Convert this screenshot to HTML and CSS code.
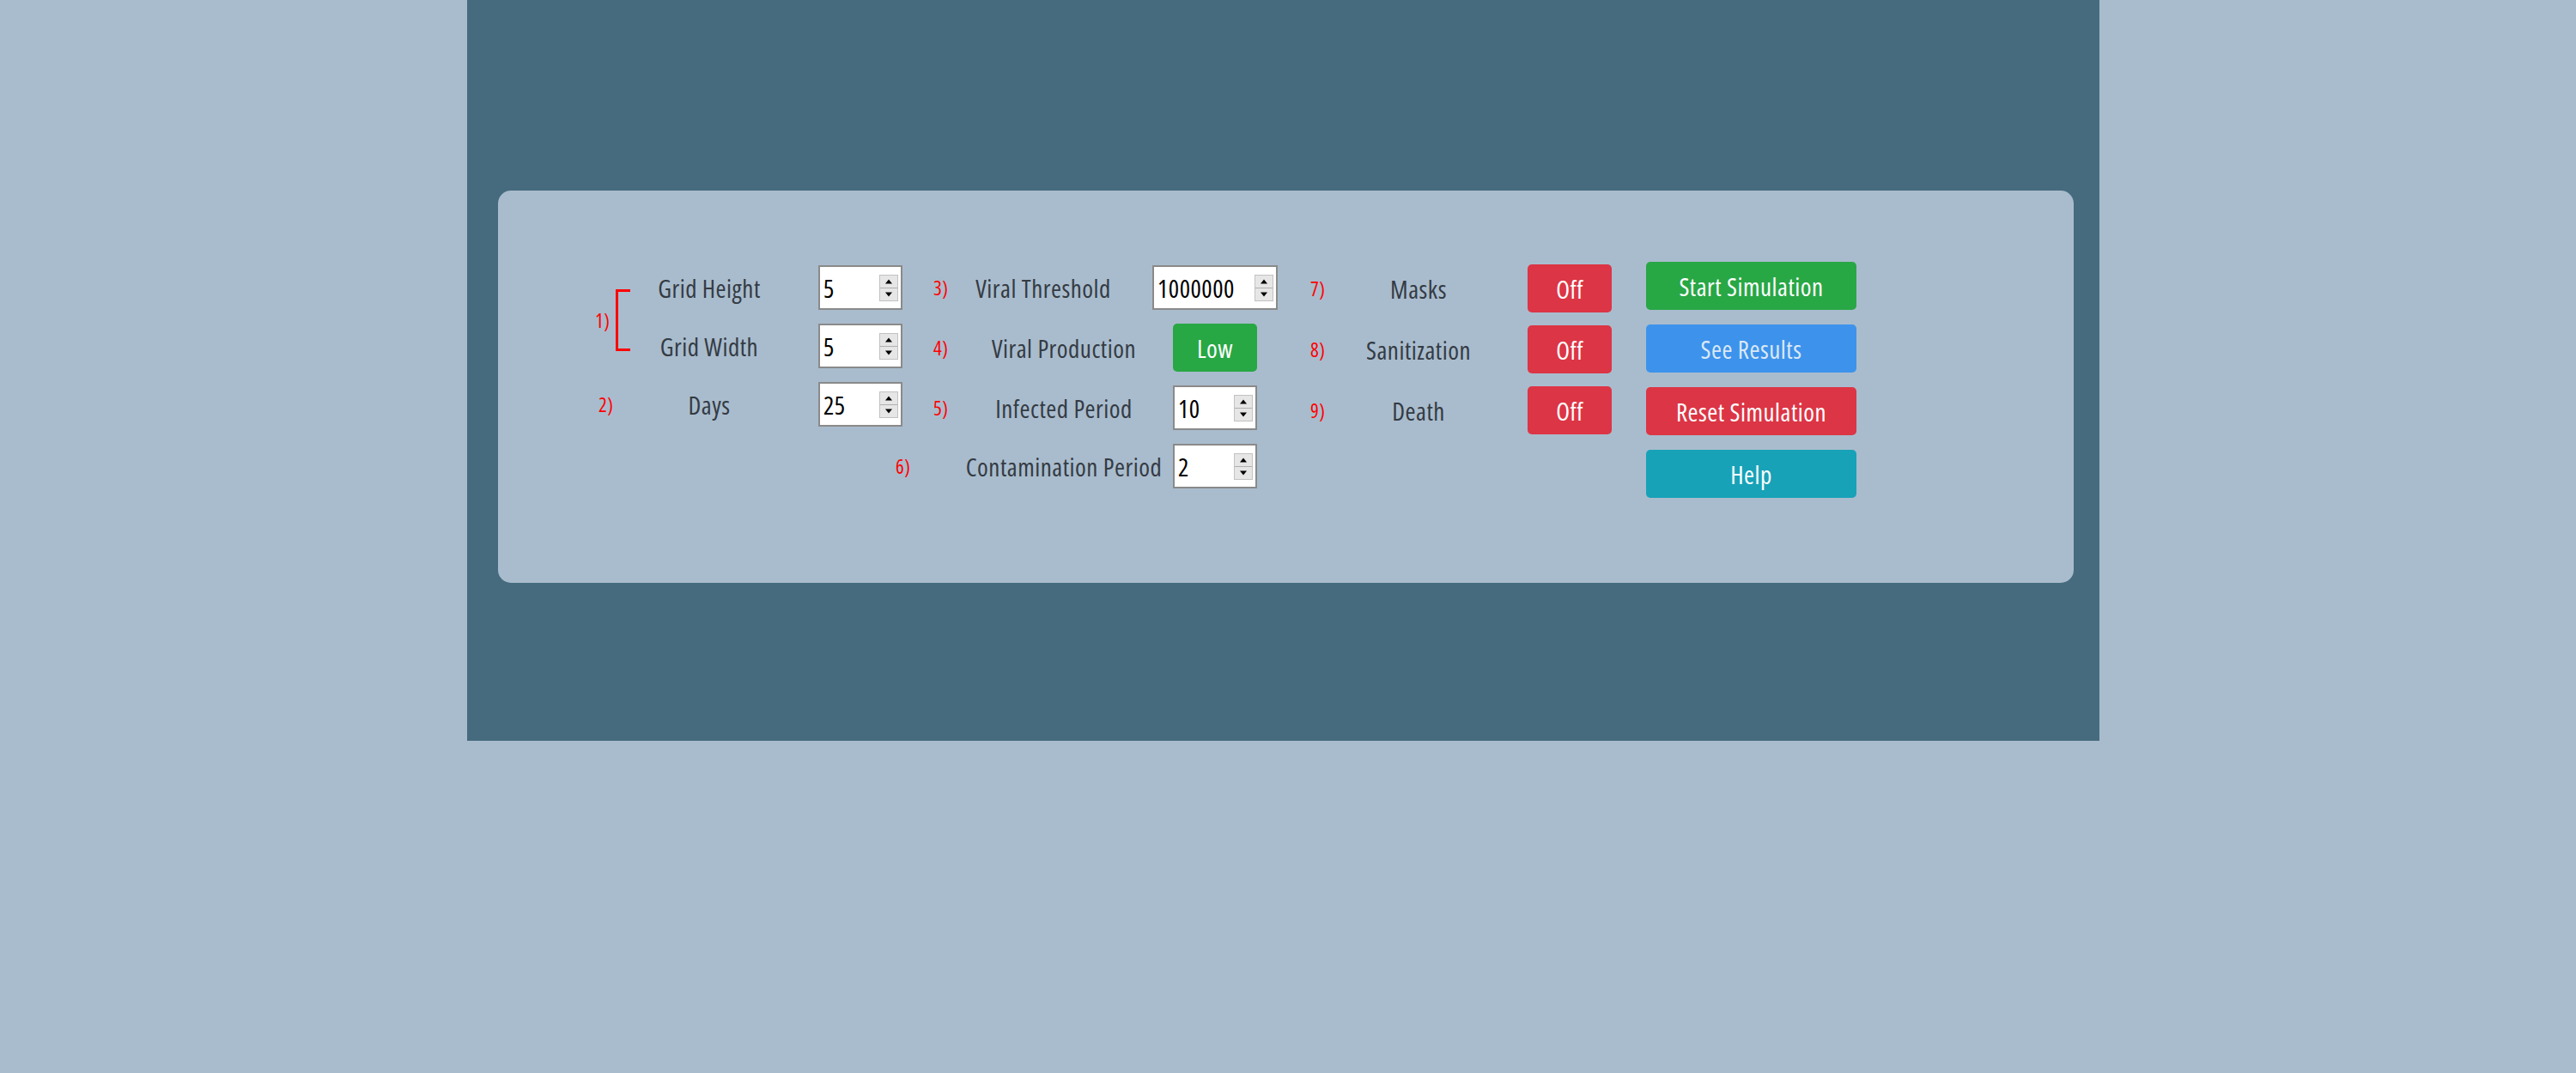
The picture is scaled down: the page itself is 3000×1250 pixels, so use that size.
FILE: index.html
```html
<!DOCTYPE html>
<html lang="en">
<head>
<meta charset="utf-8">
<title>Simulation Settings</title>
<link rel="stylesheet" href="styles.css">
</head>
<body>
<div class="stage">
  <div class="card">

    <div class="sec sec1">
      <div class="idx idx-pair"><span class="red">1)</span><span class="bracket"></span></div>
      <div class="lbl">Grid Height</div>
      <div class="spin w98"><span class="val">5</span><svg class="spinner" viewBox="0 0 22 31" width="22" height="31"><rect x="0.5" y="0.5" width="21" height="30" fill="#e6e6e6" stroke="#c2c2c2"/><line x1="1" y1="15.5" x2="21" y2="15.5" stroke="#b0b0b0"/><path d="M7 10.5 L11 5.5 L15 10.5 Z" fill="#000"/><path d="M7 20.5 L11 25.5 L15 20.5 Z" fill="#000"/></svg></div>
      <div class="lbl">Grid Width</div>
      <div class="spin w98"><span class="val">5</span><svg class="spinner" viewBox="0 0 22 31" width="22" height="31"><rect x="0.5" y="0.5" width="21" height="30" fill="#e6e6e6" stroke="#c2c2c2"/><line x1="1" y1="15.5" x2="21" y2="15.5" stroke="#b0b0b0"/><path d="M7 10.5 L11 5.5 L15 10.5 Z" fill="#000"/><path d="M7 20.5 L11 25.5 L15 20.5 Z" fill="#000"/></svg></div>
      <div class="idx idx-single"><span class="red">2)</span></div>
      <div class="lbl">Days</div>
      <div class="spin w98"><span class="val">25</span><svg class="spinner" viewBox="0 0 22 31" width="22" height="31"><rect x="0.5" y="0.5" width="21" height="30" fill="#e6e6e6" stroke="#c2c2c2"/><line x1="1" y1="15.5" x2="21" y2="15.5" stroke="#b0b0b0"/><path d="M7 10.5 L11 5.5 L15 10.5 Z" fill="#000"/><path d="M7 20.5 L11 25.5 L15 20.5 Z" fill="#000"/></svg></div>
    </div>

    <div class="sec sec2">
      <div class="row2 row2-first">
        <span class="num2 red">3)</span>
        <div class="lbl lbl2 lbl2-first">Viral Threshold</div>
        <div class="spin w146 gap-first"><span class="val">1000000</span><svg class="spinner" viewBox="0 0 22 31" width="22" height="31"><rect x="0.5" y="0.5" width="21" height="30" fill="#e6e6e6" stroke="#c2c2c2"/><line x1="1" y1="15.5" x2="21" y2="15.5" stroke="#b0b0b0"/><path d="M7 10.5 L11 5.5 L15 10.5 Z" fill="#000"/><path d="M7 20.5 L11 25.5 L15 20.5 Z" fill="#000"/></svg></div>
      </div>
      <div class="row2 row2-btn">
        <span class="num2 red">4)</span>
        <div class="lbl lbl2">Viral Production</div>
        <div class="btn btn-green toggle gap-std">Low</div>
      </div>
      <div class="row2">
        <span class="num2 red">5)</span>
        <div class="lbl lbl2">Infected Period</div>
        <div class="spin w98 gap-std"><span class="val">10</span><svg class="spinner" viewBox="0 0 22 31" width="22" height="31"><rect x="0.5" y="0.5" width="21" height="30" fill="#e6e6e6" stroke="#c2c2c2"/><line x1="1" y1="15.5" x2="21" y2="15.5" stroke="#b0b0b0"/><path d="M7 10.5 L11 5.5 L15 10.5 Z" fill="#000"/><path d="M7 20.5 L11 25.5 L15 20.5 Z" fill="#000"/></svg></div>
      </div>
      <div class="row2">
        <span class="num2 num2-out red">6)</span>
        <div class="lbl lbl2">Contamination Period</div>
        <div class="spin w98 gap-std"><span class="val">2</span><svg class="spinner" viewBox="0 0 22 31" width="22" height="31"><rect x="0.5" y="0.5" width="21" height="30" fill="#e6e6e6" stroke="#c2c2c2"/><line x1="1" y1="15.5" x2="21" y2="15.5" stroke="#b0b0b0"/><path d="M7 10.5 L11 5.5 L15 10.5 Z" fill="#000"/><path d="M7 20.5 L11 25.5 L15 20.5 Z" fill="#000"/></svg></div>
      </div>
    </div>

    <div class="sec sec3">
      <div class="row3">
        <span class="num3 red">7)</span>
        <div class="lbl lbl3">Masks</div>
        <div class="btn btn-red toggle">Off</div>
      </div>
      <div class="row3">
        <span class="num3 red">8)</span>
        <div class="lbl lbl3">Sanitization</div>
        <div class="btn btn-red toggle">Off</div>
      </div>
      <div class="row3">
        <span class="num3 red">9)</span>
        <div class="lbl lbl3">Death</div>
        <div class="btn btn-red toggle">Off</div>
      </div>
    </div>

    <div class="sec sec4">
      <div class="btn btn-green action">Start Simulation</div>
      <div class="btn btn-blue action">See Results</div>
      <div class="btn btn-red action">Reset Simulation</div>
      <div class="btn btn-teal action">Help</div>
    </div>

  </div>
</div>
</body>
</html>
```

FILE: styles.css
```css
html, body {
  margin: 0;
  padding: 0;
}

body {
  background: #a9bccd;
  width: 3000px;
  height: 1250px;
  font-family: "Open Sans", "Noto Sans", "Liberation Sans", sans-serif;
  font-stretch: 75%;
  letter-spacing: 0.5px;
}

.stage {
  box-sizing: border-box;
  margin-left: 544px;
  width: 1901px;
  height: 863px;
  background: #466b7e;
  padding-top: 222px;
  padding-left: 36px;
}

.card {
  box-sizing: border-box;
  width: 1835px;
  height: 457px;
  background: #a9bccd;
  border-radius: 15px;
  display: flex;
  align-items: flex-start;
  padding-left: 110px;
}

.red {
  color: #ff0000;
  font-size: 23px;
  line-height: 1;
  white-space: nowrap;
}

.lbl {
  color: #343b44;
  font-size: 29px;
  line-height: 1;
  text-align: center;
  white-space: nowrap;
}

/* spin boxes */
.spin {
  box-sizing: border-box;
  height: 52px;
  background: #ffffff;
  border: 2px solid #8a8a8a;
  display: flex;
  align-items: center;
  justify-content: space-between;
  padding: 0 3px 0 4px;
}

.w98 { width: 98px; }
.w146 { width: 146px; }

.val {
  color: #000;
  font-size: 29px;
  line-height: 1;
}

.spinner {
  display: block;
  flex: none;
}

/* buttons */
.btn {
  box-sizing: border-box;
  display: flex;
  align-items: center;
  justify-content: center;
  border-radius: 5px;
  color: #ffffff;
  font-size: 29px;
  line-height: 1;
  white-space: nowrap;
}

.btn-green { background: #28a745; }
.btn-red { background: #dc3545; }
.btn-blue { background: #3d93eb; color: #dbe8f8; }
.btn-teal { background: #17a2b8; }

.toggle {
  width: 98px;
  height: 56px;
}

.action {
  width: 245px;
  height: 56px;
}

/* section 1 */
.sec1 {
  margin-top: 87px;
  display: grid;
  grid-template-columns: 50px 172px 139px;
  grid-template-rows: repeat(3, 52px);
  row-gap: 16px;
  align-items: center;
}

.sec1 .spin {
  justify-self: end;
}

.idx {
  display: flex;
  align-items: center;
}

.idx-pair {
  grid-row: 1 / 3;
  grid-column: 1;
  padding-left: 3px;
  padding-top: 8px;
}

.idx-single {
  padding-left: 7px;
}

.bracket {
  display: block;
  width: 14px;
  height: 66px;
  margin-left: 7px;
  border: 3px solid #ff0000;
  border-right: none;
}

/* section 2 */
.sec2 {
  margin-left: 15px;
  margin-top: 87px;
  display: flex;
  flex-direction: column;
  gap: 16px;
}

.row2 {
  display: flex;
  align-items: center;
  height: 52px;
}

.row2-btn {
  height: 56px;
}

.num2 {
  box-sizing: border-box;
  width: 54px;
  padding-left: 21px;
}

.num2-out {
  width: 77px;
  margin-left: -23px;
  padding-left: 0;
}

.lbl2 {
  width: 238px;
}

.lbl2-first {
  width: 190px;
}

.gap-std { margin-left: 8px; }
.gap-first { margin-left: 32px; }

/* section 3 */
.sec3 {
  margin-left: 32px;
  margin-top: 86px;
  display: flex;
  flex-direction: column;
  gap: 15px;
}

.row3 {
  display: flex;
  align-items: center;
  height: 56px;
}

.num3 {
  box-sizing: border-box;
  width: 40px;
  padding-left: 6px;
}

.lbl3 {
  width: 184px;
  margin-right: 35px;
}

/* section 4 */
.sec4 {
  margin-left: 40px;
  margin-top: 83px;
  display: flex;
  flex-direction: column;
  gap: 17px;
}
```
